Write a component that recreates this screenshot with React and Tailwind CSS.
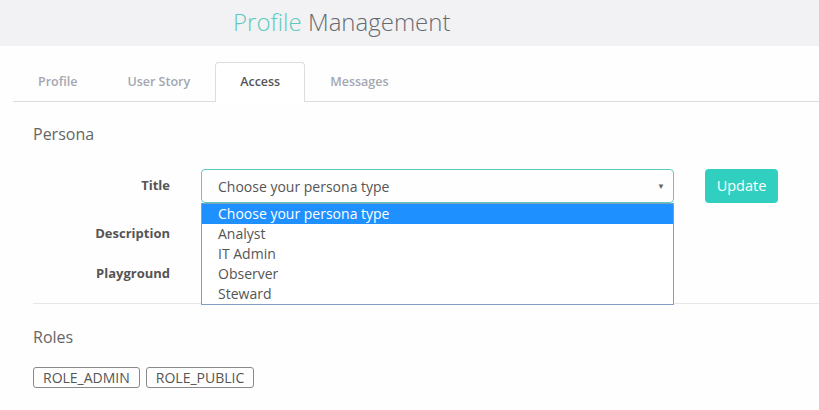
export default function App() {
  const tabs = ['Profile', 'User Story', 'Access', 'Messages'];
  const options = ['Choose your persona type', 'Analyst', 'IT Admin', 'Observer', 'Steward'];
  return (
    <div className="w-[819px] h-[410px] bg-[#fefefe] overflow-hidden" style={{ fontFamily: '"Open Sans", sans-serif' }}>
      <div className="h-[46px] bg-[#f2f2f4] pl-[233px] pt-[5px] text-[24px] font-light leading-[34px]">
        <span className="text-[#5ccabe]">Profile</span> <span className="text-[#666a70]">Management</span>
      </div>

      <div className="ml-[13px] mt-[16px] flex border-b border-[#dcdde0] h-[40px]">
        {tabs.map((t) => (
          <div
            key={t}
            className={`px-[24px] flex items-center text-[12.5px] font-semibold border border-b-0 rounded-t-[4px] ${
              t === 'Access' ? 'border-[#dcdde0] bg-white text-[#555] -mb-px' : 'border-transparent text-[#a3a7b0]'
            }`}
          >
            {t}
          </div>
        ))}
      </div>

      <div className="pl-[33px]">
        <div className="mt-[21px] text-[16px] text-[#666] leading-[22px]">Persona</div>

        <div className="relative mt-[24px]">
          <div className="flex items-center h-[34px]">
            <div className="w-[137px] text-right text-[13px] font-bold text-[#555]">Title</div>
            <div className="ml-[31px] w-[473px] h-[34px] border border-[#5ccabe] rounded-[4px] flex items-center justify-between pl-[16px] pr-[8px] text-[14px] text-[#555]">
              <span>Choose your persona type</span>
              <span className="text-[8px] text-[#666]">▼</span>
            </div>
            <div className="ml-[31px] w-[73px] h-[34px] rounded-[4px] bg-[#30cfc0] text-white text-[14.5px] flex items-center justify-center">
              Update
            </div>
          </div>
          <div className="flex items-center h-[32px] mt-[15px]">
            <div className="w-[137px] text-right text-[13px] font-bold text-[#555]">Description</div>
          </div>
          <div className="flex items-center h-[32px] mt-[8px]">
            <div className="w-[137px] text-right text-[13px] font-bold text-[#555]">Playground</div>
          </div>

          <div className="absolute left-[168px] top-[34px] w-[473px] border border-[#7f9fc4] bg-white z-10">
            {options.map((o, i) => (
              <div
                key={o}
                className={`h-[20px] leading-[20px] pl-[16px] text-[14px] ${i === 0 ? 'bg-[#1e90ff] text-white' : 'text-[#555]'}`}
              >
                {o}
              </div>
            ))}
          </div>
        </div>

        <div className="mt-[13px] border-t border-[#e6e7ea]" />

        <div className="mt-[22px] text-[16px] text-[#666] leading-[22px]">Roles</div>

        <div className="mt-[19px] flex gap-[6px]">
          {['ROLE_ADMIN', 'ROLE_PUBLIC'].map((r) => (
            <div key={r} className="h-[21px] px-[9px] border border-[#8a8a8a] rounded-[3px] text-[14px] leading-[19px] text-[#555]">
              {r}
            </div>
          ))}
        </div>
      </div>
    </div>
  );
}
